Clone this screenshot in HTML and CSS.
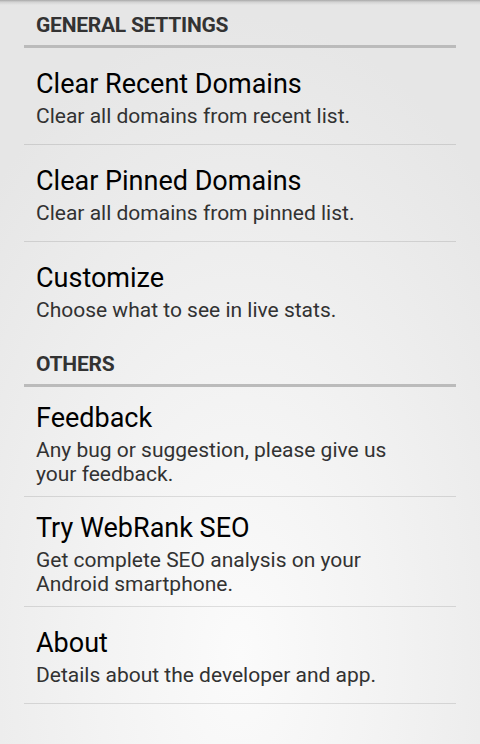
FILE: index.html
```html
<!DOCTYPE html>
<html lang="en">

<head>
    <meta charset="UTF-8">
    <meta name="viewport" content="width=device-width, initial-scale=1.0">
    <title>Settings</title>

    <link rel="stylesheet" href="styles.css">
</head>

<body>
    <div id="prefList">
        <div class="category">General Settings</div>
        <div class="pref">
            <p class="prefTitle">Clear Recent Domains</p>
            <p class="prefSummary">Clear all domains from recent list.</p>
        </div>
        <div class="pref">
            <p class="prefTitle">Clear Pinned Domains</p>
            <p class="prefSummary">Clear all domains from pinned list.</p>
        </div>
        <div class="pref last">
            <p class="prefTitle">Customize</p>
            <p class="prefSummary">Choose what to see in live stats.</p>
        </div>

        <div class="category">Others</div>
        <div class="pref">
            <p class="prefTitle">Feedback</p>
            <p class="prefSummary">Any bug or suggestion, please give us your feedback.</p>
        </div>
        <div class="pref">
            <p class="prefTitle">Try WebRank SEO</p>
            <p class="prefSummary">Get complete SEO analysis on your Android smartphone.</p>
        </div>
        <div class="pref">
            <p class="prefTitle">About</p>
            <p class="prefSummary">Details about the developer and app.</p>
        </div>
    </div>
</body>

</html>
```

FILE: styles.css
```css
html {
    height: 100%;
}

body {
    margin: 0;
    min-height: 100%;
    font-family: Roboto, "Noto Sans", sans-serif;
    /* top shadow from the action bar + holo light window background */
    background:
        linear-gradient(#a8a8a8, #d2d2d2 2px, rgba(230, 230, 230, 0) 5px) no-repeat top / 100% 5px,
        radial-gradient(ellipse 360px 640px at 50% 88%, #fbfbfb 0%, #f3f3f3 40%, #e6e6e6 100%);
    background-color: #e6e6e6;
}

#prefList {
    margin: 0 24px;
}

.category {
    padding: 13px 12px 8px 12px;
    font-size: 21px;
    line-height: 24px;
    font-weight: bold;
    letter-spacing: -0.25px;
    text-transform: uppercase;
    color: #333333;
    border-bottom: 3px solid #bbbbbb;
}

.pref {
    display: flex;
    flex-direction: column;
    justify-content: center;
    min-height: 71px;
    padding: 15px 12px 10px 12px;
    border-bottom: 1px solid rgba(0, 0, 0, 0.11);
}

.pref.last {
    border-bottom-color: transparent;
}

.prefTitle {
    margin: 0;
    font-size: 27px;
    line-height: 32px;
    color: #000000;
}

.prefSummary {
    margin: 5px 0 0 0;
    font-size: 21px;
    line-height: 23.5px;
    color: #323232;
    max-width: 370px;
}
```
